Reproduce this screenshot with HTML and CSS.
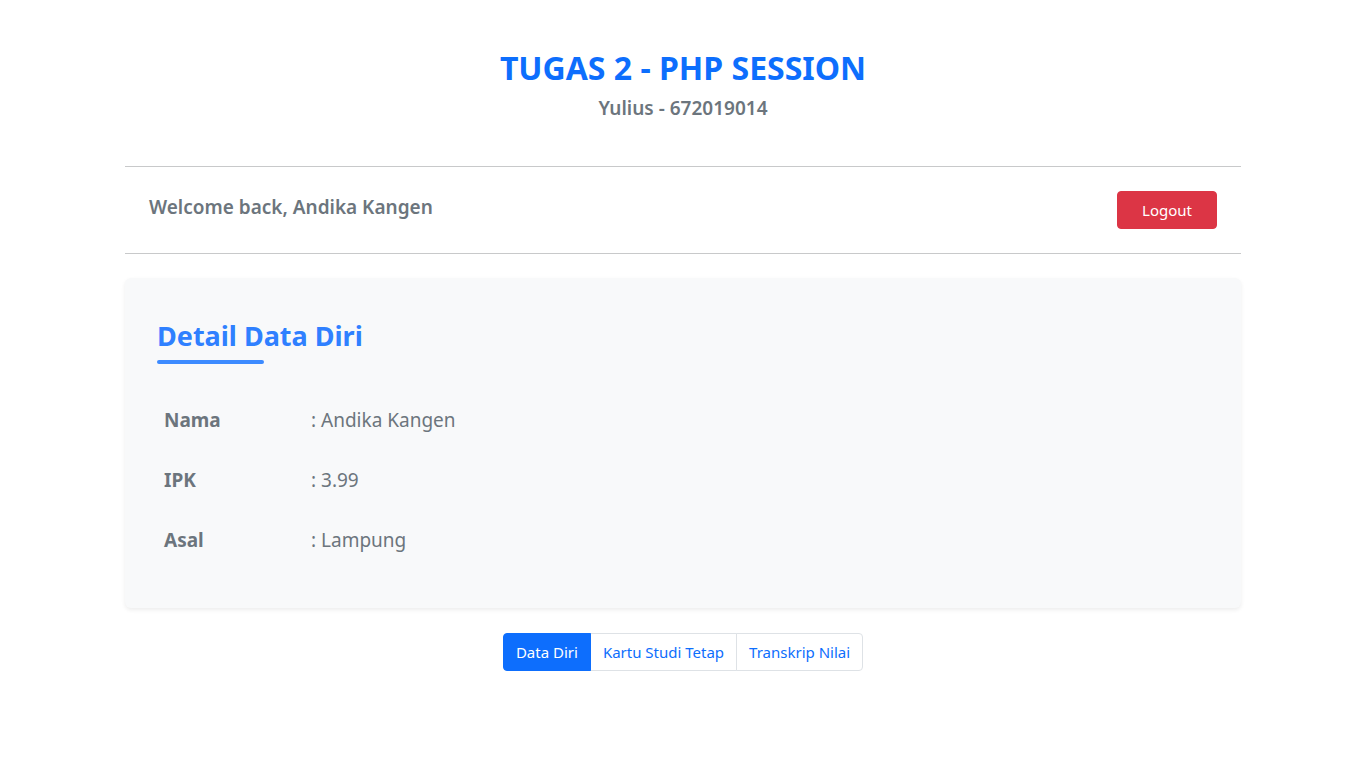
FILE: index.html
```html
<!DOCTYPE html>
<html lang="id">
<head>
<meta charset="utf-8">
<title>Tugas 2 - PHP Session</title>
<link rel="stylesheet" href="styles.css">
</head>
<body>
<div class="container">
  <header class="page-head">
    <h1 class="title">TUGAS 2 - PHP SESSION</h1>
    <h5 class="subtitle">Yulius - 672019014</h5>
  </header>

  <div class="welcome-bar">
    <h5 class="welcome">Welcome back, Andika Kangen</h5>
    <button class="btn btn-danger">Logout</button>
  </div>

  <section class="card">
    <h2 class="card-title">Detail Data Diri</h2>
    <div class="title-bar"></div>
    <table class="data">
      <tr><th>Nama</th><td>: Andika Kangen</td></tr>
      <tr><th>IPK</th><td>: 3.99</td></tr>
      <tr><th>Asal</th><td>: Lampung</td></tr>
    </table>
  </section>

  <nav class="btn-group">
    <a class="seg active">Data Diri</a>
    <a class="seg">Kartu Studi Tetap</a>
    <a class="seg">Transkrip Nilai</a>
  </nav>
</div>
</body>
</html>
```
FILE: styles.css
```css
* { box-sizing: border-box; }
html, body { margin: 0; padding: 0; background: #fff; }
body {
  font-family: "Noto Sans", "Open Sans", "Liberation Sans", sans-serif;
  color: #212529;
  font-size: 16px;
}
.container {
  width: 1140px;
  margin: 0 auto;
  padding: 0 12px;
}
.page-head {
  text-align: center;
  padding-top: 44px;
  padding-bottom: 46px;
  border-bottom: 1px solid #c8c9ca;
}
.title {
  margin: 0;
  font-size: 32px;
  line-height: 48px;
  font-weight: 700;
  color: #0d6efd;
}
.subtitle {
  margin: 4px 0 0;
  font-size: 19px;
  line-height: 24px;
  font-weight: 600;
  color: #6c757d;
}
.welcome-bar {
  display: flex;
  justify-content: space-between;
  align-items: flex-start;
  padding: 24px 24px 24px;
  border-bottom: 1px solid #c8c9ca;
  height: 87px;
}
.welcome {
  margin: 4px 0 0;
  font-size: 19px;
  line-height: 24px;
  font-weight: 600;
  color: #6c757d;
}
.btn {
  font-family: inherit;
  font-size: 15px;
  line-height: 24px;
  border-radius: 4px;
  border: 1px solid transparent;
  padding: 6px 12px;
  cursor: pointer;
}
.btn-danger {
  background: #dc3545;
  border-color: #dc3545;
  color: #fff;
  width: 100px;
  height: 38px;
}
.card {
  margin-top: 24px;
  background: #f8f9fa;
  border-radius: 6px;
  box-shadow: 0 2px 4px rgba(0,0,0,0.075);
  padding: 32px 32px 30px;
  height: 330px;
}
.card-title {
  margin: 8px 0 0;
  font-size: 27px;
  line-height: 36px;
  font-weight: 700;
  color: #2f80ff;
}
.title-bar {
  width: 107px;
  height: 4px;
  border-radius: 2px;
  background: #3d8bff;
  margin-top: 6px;
}
.data {
  border-collapse: collapse;
  margin-top: 26px;
}
.data th, .data td {
  height: 60px;
  padding: 0 8px;
  font-size: 19px;
  color: #6c757d;
  text-align: left;
  vertical-align: middle;
}
.data th {
  width: 146px;
  font-weight: 700;
  padding-left: 7px;
}
.data td { font-weight: 400; }
.btn-group {
  display: flex;
  justify-content: center;
  margin-top: 25px;
}
.seg {
  display: block;
  font-size: 15px;
  line-height: 24px;
  padding: 6px 12px;
  height: 38px;
  color: #0d6efd;
  background: #fff;
  border: 1px solid #dee2e6;
  margin-left: -1px;
  cursor: pointer;
}
.seg:first-child { border-radius: 4px 0 0 4px; margin-left: 0; }
.seg:last-child { border-radius: 0 4px 4px 0; }
.seg.active { background: #0d6efd; border-color: #0d6efd; color: #fff; position: relative; }
```
